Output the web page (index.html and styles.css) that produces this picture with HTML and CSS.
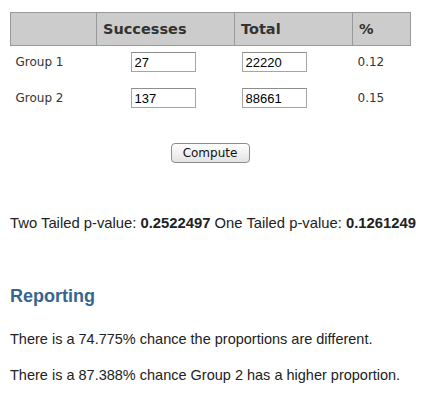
FILE: index.html
```html
<!DOCTYPE html>
<html lang="en">
  <head>
    <meta charset="UTF-8" />
    <title>Proportion Test</title>
    <meta name="viewport" content="width=device-width, initial-scale=1.0" />
    <link rel="stylesheet" href="styles.css">
  </head>
  <body>
    <div class="container">
      <table id="groups-table">
        <thead>
          <tr>
            <th class="col-name"></th>
            <th class="col-succ">Successes</th>
            <th class="col-total">Total</th>
            <th class="col-pct">%</th>
          </tr>
        </thead>
        <tbody>
          <tr>
            <td class="name">Group 1</td>
            <td class="succ"><input type="text" value="27" /></td>
            <td class="total"><input type="text" value="22220" /></td>
            <td class="pct">0.12</td>
          </tr>
          <tr>
            <td class="name">Group 2</td>
            <td class="succ"><input type="text" value="137" /></td>
            <td class="total"><input type="text" value="88661" /></td>
            <td class="pct">0.15</td>
          </tr>
        </tbody>
      </table>

      <div class="actions">
        <button class="btn-compute">Compute</button>
      </div>

      <p class="result">
        Two Tailed p-value: <strong>0.2522497</strong> One Tailed p-value: <strong>0.1261249</strong>
      </p>

      <h2>Reporting</h2>
      <p class="report">There is a 74.775% chance the proportions are different.</p>
      <p class="report">There is a 87.388% chance Group 2 has a higher proportion.</p>
    </div>
  </body>
</html>
```

FILE: styles.css
```css
body {
  font-family: "Liberation Sans", Arial, sans-serif;
  background: #fff;
  color: #222;
  margin: 0;
}

.container {
  padding: 12px 10px;
}

table {
  border-collapse: collapse;
  table-layout: fixed;
  width: 400px;
}

th {
  background-color: #cccccc;
  border: 1px solid #999;
  height: 32px;
  padding: 0 0 0 6px;
  text-align: left;
  font-family: "DejaVu Sans", Verdana, sans-serif;
  font-size: 14.5px;
  font-weight: bold;
  color: #333;
}

.col-name {
  width: 79px;
}

.col-succ {
  width: 131px;
}

.col-total {
  width: 111px;
}

.col-pct {
  width: 51px;
}

td {
  padding: 6px 0 10px 0;
  vertical-align: middle;
  font-family: "DejaVu Sans", Verdana, sans-serif;
  font-size: 12px;
  color: #333;
}

td.name,
td.pct {
  padding-left: 5px;
}

td.succ {
  padding-left: 34px;
}

td.total {
  padding-left: 7px;
}

input {
  box-sizing: border-box;
  width: 65px;
  height: 20px;
  margin: 0;
  padding: 1px 3px;
  border: 1px solid #a5a5a5;
  border-top-color: #8e8e8e;
  font-family: "Liberation Sans", Arial, sans-serif;
  font-size: 13px;
  color: #000;
  display: block;
}

.actions {
  width: 400px;
  text-align: center;
  margin-top: 25px;
}

.btn-compute {
  width: 79px;
  height: 20px;
  padding: 0;
  border: 1px solid #8c8c8c;
  border-radius: 4px;
  background: linear-gradient(#ffffff, #f1f1f1 50%, #e3e3e3);
  font-family: "DejaVu Sans", "Lucida Grande", sans-serif;
  font-size: 12px;
  color: #111;
}

.result {
  font-size: 14.8px;
  margin: 52px 0 0;
}

h2 {
  color: #36668f;
  font-size: 18px;
  margin: 55px 0 0;
}

.report {
  font-size: 14.5px;
  margin: 24px 0 0;
}

.report + .report {
  margin-top: 20px;
}
```
